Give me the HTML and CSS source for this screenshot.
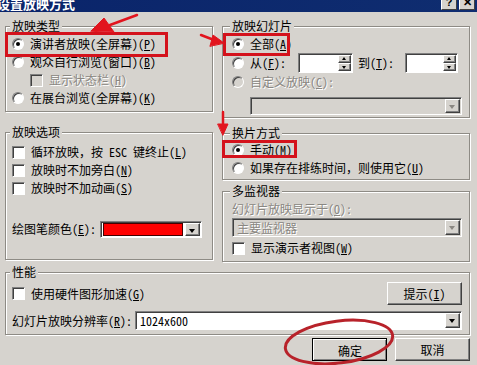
FILE: index.html
```html
<!DOCTYPE html>
<html lang="zh-CN">
<head>
    <meta charset="UTF-8">
    <meta name="viewport" content="width=device-width, initial-scale=1.0">
    <title>设置放映方式</title>
    <link rel="stylesheet" href="styles.css">
</head>
<body>
    <div class="dialog">
        <div class="titlebar">
            <span class="title">设置放映方式</span>
            <span class="title-btns"><span class="tbtn">?</span><span class="tbtn">✕</span></span>
        </div>

        <div class="main">
            <div class="cols">
                <div class="col">
                    <fieldset class="group type-group">
                        <legend>放映类型</legend>
                        <div class="row"><span class="radio on"></span><span>演讲者放映(全屏幕)(<u>P</u>)</span></div>
                        <div class="row"><span class="radio"></span><span>观众自行浏览(窗口)(<u>B</u>)</span></div>
                        <div class="row indent disabled"><span class="check"></span><span>显示状态栏(<u>H</u>)</span></div>
                        <div class="row"><span class="radio"></span><span>在展台浏览(全屏幕)(<u>K</u>)</span></div>
                    </fieldset>

                    <fieldset class="group options-group">
                        <legend>放映选项</legend>
                        <div class="row"><span class="check"></span><span>循环放映<span class="fw">，</span>按 ESC 键终止(<u>L</u>)</span></div>
                        <div class="row"><span class="check"></span><span>放映时不加旁白(<u>N</u>)</span></div>
                        <div class="row"><span class="check"></span><span>放映时不加动画(<u>S</u>)</span></div>
                        <div class="row pen-row">
                            <span class="pen-label">绘图笔颜色(<u>E</u>):</span>
                            <span class="combo color-combo"><span class="swatch"></span><span class="drop-btn"></span></span>
                        </div>
                    </fieldset>
                </div>

                <div class="col">
                    <fieldset class="group slides-group">
                        <legend>放映幻灯片</legend>
                        <div class="row"><span class="radio on"></span><span>全部(<u>A</u>)</span></div>
                        <div class="row range-row">
                            <span class="radio"></span>
                            <span class="from-label">从(<u>F</u>):</span>
                            <span class="spin from-spin"><span class="spin-btns"><span class="spin-up"></span><span class="spin-down"></span></span></span>
                            <span class="to-label">到(<u>T</u>):</span>
                            <span class="spin to-spin"><span class="spin-btns"><span class="spin-up"></span><span class="spin-down"></span></span></span>
                        </div>
                        <div class="row disabled"><span class="radio"></span><span>自定义放映(<u>C</u>):</span></div>
                        <div class="combo custom-combo disabled"><span class="combo-text"></span><span class="drop-btn"></span></div>
                    </fieldset>

                    <fieldset class="group advance-group">
                        <legend>换片方式</legend>
                        <div class="row"><span class="radio on"></span><span>手动(<u>M</u>)</span></div>
                        <div class="row"><span class="radio"></span><span>如果存在排练时间<span class="fw">，</span>则使用它(<u>U</u>)</span></div>
                    </fieldset>

                    <fieldset class="group monitor-group">
                        <legend>多监视器</legend>
                        <div class="row disabled"><span>幻灯片放映显示于(<u>O</u>):</span></div>
                        <div class="combo monitor-combo disabled"><span class="combo-text">主要监视器</span><span class="drop-btn"></span></div>
                        <div class="row presenter-row"><span class="check"></span><span>显示演示者视图(<u>W</u>)</span></div>
                    </fieldset>
                </div>
            </div>

            <fieldset class="group perf-group">
                <legend>性能</legend>
                <div class="row perf-row">
                    <span class="check"></span><span>使用硬件图形加速(<u>G</u>)</span>
                    <span class="btn tip-btn">提示(<u>I</u>)</span>
                </div>
                <div class="row res-row">
                    <span class="res-label">幻灯片放映分辨率(<u>R</u>):</span>
                    <span class="combo res-combo"><span class="combo-text">1024x600</span><span class="drop-btn"></span></span>
                </div>
            </fieldset>

            <div class="actions">
                <span class="btn default">确定</span>
                <span class="btn">取消</span>
            </div>
        </div>

        <!-- red marks drawn on top of the screenshot -->
        <svg class="marks" width="477" height="365" viewBox="0 0 477 365">
            <g fill="none" stroke="#d4121c" stroke-width="3">
                <rect x="6.5" y="33.5" width="160" height="22"/>
                <rect x="224.5" y="34.5" width="64" height="20"/>
                <rect x="223.5" y="141.5" width="72" height="15"/>
            </g>
            <g fill="#e2141e" stroke="#e2141e" stroke-linecap="round">
                <line x1="137" y1="15" x2="110" y2="25" stroke-width="2.5"/>
                <polygon points="91,31 104,18 114,32" stroke-width="1"/>
                <line x1="201" y1="35" x2="214" y2="40" stroke-width="2.5"/>
                <polygon points="224,43 213,35 210,46" stroke-width="1"/>
                <line x1="223" y1="112" x2="223" y2="126" stroke-width="2.5"/>
                <polygon points="218,124 228,124 223,135" stroke-width="1"/>
            </g>
            <ellipse cx="339" cy="342" rx="54" ry="21" transform="rotate(-7 339 342)" fill="none" stroke="#b8222a" stroke-width="3"/>
        </svg>
    </div>
</body>
</html>
```

FILE: styles.css
```css
body {
    margin: 0;
    background-color: #d6d3ce;
    font-family: "Noto Sans CJK SC", "Liberation Sans", sans-serif;
    font-size: 12px;
    font-feature-settings: "hwid";
    color: #000;
}
.fw {
    font-feature-settings: normal;
}
.dialog {
    position: relative;
    width: 477px;
    height: 365px;
    overflow: hidden;
    background-color: #d6d3ce;
}
.titlebar {
    height: 12px;
    background: linear-gradient(90deg, #0a246a, #0f2d70);
    display: flex;
    justify-content: space-between;
    align-items: flex-end;
    overflow: hidden;
}
.title {
    color: #fff;
    font-weight: bold;
    font-size: 13px;
    line-height: 16px;
    margin-left: -3px;
}
.title-btns {
    display: flex;
    gap: 2px;
    margin: 0 2px 2px 0;
}
.tbtn {
    width: 14px;
    height: 13px;
    background-color: #d6d3ce;
    border: 1px solid;
    border-color: #fff #404040 #404040 #fff;
    font: bold 11px/13px "Liberation Sans", sans-serif;
    text-align: center;
}
.main {
    padding: 7px 7px 0 5px;
}
.cols {
    display: grid;
    grid-template-columns: 208px 248px;
    gap: 9px;
    align-items: start;
}
.col {
    display: flex;
    flex-direction: column;
}
.group {
    margin: 0;
    padding: 2px 7px 0 6px;
    min-width: 0;
    box-sizing: border-box;
    border: 1px solid #8e8b85;
    box-shadow: 1px 1px 0 #fff, inset 1px 1px 0 #fff;
}
.group legend {
    padding: 0 2px;
    margin-left: -2px;
    line-height: 14px;
    background-color: #d6d3ce;
}
.row {
    display: flex;
    align-items: center;
    gap: 6px;
    height: 18px;
    line-height: 18px;
    white-space: nowrap;
}
.row u {
    text-decoration: underline;
}
.row.indent {
    padding-left: 18px;
}
.disabled {
    color: #8a8782;
    text-shadow: 1px 1px 0 #fff;
}

/* radios and checkboxes */
.radio,
.check {
    flex: none;
    box-sizing: border-box;
    width: 12px;
    height: 12px;
    background-color: #fff;
    border: 1px solid;
    border-color: #808080 #fff #fff #808080;
    box-shadow: inset 1px 1px 0 #404040;
    position: relative;
}
.radio {
    border-radius: 50%;
}
.check {
    width: 13px;
    height: 13px;
}
.disabled .radio,
.disabled .check {
    background-color: #d6d3ce;
}
.radio.on::after {
    content: "";
    position: absolute;
    left: 3px;
    top: 3px;
    width: 4px;
    height: 4px;
    border-radius: 50%;
    background-color: #000;
}

/* sunken fields */
.combo,
.spin {
    display: flex;
    box-sizing: border-box;
    background-color: #fff;
    border: 1px solid;
    border-color: #808080 #fff #fff #808080;
    box-shadow: inset 1px 1px 0 #404040;
    padding: 1px 1px 1px 2px;
}
.combo.disabled {
    background-color: #d6d3ce;
}
.combo-text {
    flex: 1;
    line-height: 15px;
    padding-left: 2px;
}
.drop-btn,
.spin-up,
.spin-down,
.btn {
    box-sizing: border-box;
    background-color: #d6d3ce;
    border: 1px solid;
    border-color: #fff #404040 #404040 #fff;
    box-shadow: inset -1px -1px 0 #808080;
}
.drop-btn {
    flex: none;
    width: 15px;
    position: relative;
}
.drop-btn::after {
    content: "";
    position: absolute;
    left: 3px;
    top: 5px;
    border: 3.5px solid transparent;
    border-top: 4px solid #000;
}
.disabled .drop-btn::after {
    border-top-color: #8a8782;
}

.spin {
    height: 20px;
    justify-content: flex-end;
}
.spin-btns {
    display: flex;
    flex-direction: column;
    width: 13px;
}
.spin-up,
.spin-down {
    flex: 1;
    position: relative;
}
.spin-up::after,
.spin-down::after {
    content: "";
    position: absolute;
    left: 3px;
    border: 2.5px solid transparent;
}
.spin-up::after {
    top: -1px;
    border-bottom: 3px solid #000;
}
.spin-down::after {
    top: 2px;
    border-top: 3px solid #000;
}

/* 放映类型 */
.type-group {
    height: 93px;
}

/* 放映选项 */
.options-group {
    margin-top: 13px;
    height: 135px;
    padding-top: 4px;
}
.pen-row {
    margin-top: 23px;
    gap: 0;
}
.pen-label {
    width: 88px;
}
.color-combo {
    width: 102px;
    height: 17px;
}
.swatch {
    flex: 1;
    margin-right: 2px;
    background-color: #f00;
    border: 1px solid #400;
}

/* 放映幻灯片 */
.slides-group {
    height: 99px;
    padding-left: 9px;
}
.range-row {
    height: 20px;
    gap: 0;
}
.range-row .radio {
    margin-right: 6px;
}
.from-label {
    width: 48px;
}
.from-spin {
    width: 55px;
}
.to-label {
    width: 47px;
    margin-left: 5px;
}
.to-spin {
    width: 53px;
}
.custom-combo {
    margin: 6px 0 0 18px;
    height: 18px;
}

/* 换片方式 */
.advance-group {
    margin-top: 8px;
    height: 54px;
    padding-top: 1px;
    padding-left: 9px;
}

/* 多监视器 */
.monitor-group {
    margin-top: 4px;
    height: 78px;
    padding-left: 9px;
}
.monitor-combo {
    height: 19px;
    color: #8a8782;
    text-shadow: 1px 1px 0 #fff;
}
.presenter-row {
    margin-top: 2px;
}

/* 性能 */
.perf-group {
    margin-top: 3px;
    height: 70px;
    padding-top: 3px;
}
.perf-row {
    height: 23px;
}
.tip-btn {
    margin-left: auto;
    width: 76px;
}
.res-row {
    margin-top: 6px;
    height: 19px;
    gap: 0;
}
.res-label {
    width: 123px;
}
.res-combo {
    flex: 1;
    height: 19px;
}

/* buttons */
.btn {
    display: flex;
    align-items: center;
    justify-content: center;
    width: 75px;
    height: 23px;
    white-space: nowrap;
}
.btn.default {
    outline: 1px solid #000;
    outline-offset: -1px;
    border-width: 2px 1px 1px 2px;
}
.actions {
    display: flex;
    justify-content: flex-end;
    gap: 8px;
    margin-top: 3px;
}

.marks {
    position: absolute;
    left: 0;
    top: 0;
    pointer-events: none;
}
```
